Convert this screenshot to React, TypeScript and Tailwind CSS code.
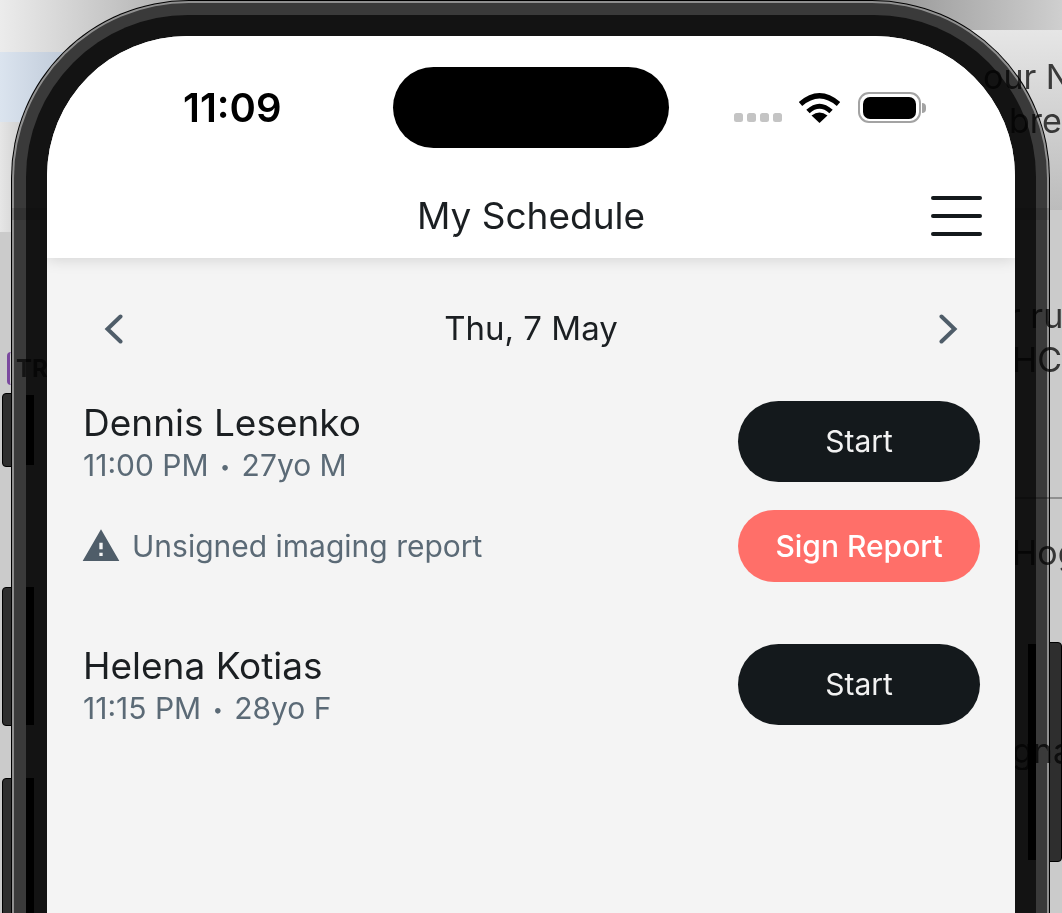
const font = { fontFamily: "Inter, 'Noto Sans', sans-serif" };

const Chevron = ({ flip }: { flip?: boolean }) => (
  <svg width="20" height="30" viewBox="0 0 20 30" fill="none" className={flip ? "rotate-180" : ""}>
    <path d="M16.5 2.5 L3.5 15 L16.5 27.5" stroke="#4f5d69" strokeWidth="4" strokeLinecap="round" strokeLinejoin="miter" />
  </svg>
);

const Wifi = () => (
  <svg width="43" height="31" viewBox="0 0 43 31" fill="none">
    <path d="M2.5 12 Q21.5 -4.5 40.5 12" stroke="#000" strokeWidth="5.2" />
    <path d="M10 19.5 Q21.5 9 33 19.5" stroke="#000" strokeWidth="5" />
    <path d="M21.5 31 L13.5 23.5 Q21.5 17.5 29.5 23.5 Z" fill="#000" />
  </svg>
);

const Battery = () => (
  <div className="flex items-center gap-[1px]">
    <div className="flex h-[31px] w-[63px] items-center justify-center rounded-[11px] border-2 border-[#a3a3a3] bg-white">
      <div className="h-[22px] w-[53px] rounded-[7px] bg-black" />
    </div>
    <div className="h-[10px] w-[4px] rounded-r-full bg-[#a3a3a3]" />
  </div>
);

const Warning = () => (
  <svg width="40" height="40" viewBox="0 0 24 24" className="ml-[-2px]">
    <path fill="#4f5d69" d="M1 21h22L12 2 1 21zm12-3h-2v-2h2v2zm0-4h-2v-4h2v4z" />
  </svg>
);

const PatientRow = ({ name, time, info }: { name: string; time: string; info: string }) => (
  <div className="flex items-start justify-between">
    <div className="flex h-[81px] flex-col">
      <span className="text-[37px] leading-[44px] text-[#1b1f22]">{name}</span>
      <span className="mt-[1px] text-[30px] leading-[38px] text-[#5b6a76]">
        {time} <span className="mx-[3px] text-[18px] align-[3px]">•</span> {info}
      </span>
    </div>
    <button className="h-[81px] w-[242px] rounded-[41px] bg-[#14191c] text-[30px] text-[#f2f2f2]">Start</button>
  </div>
);

const BezelStrip = ({ className }: { className: string }) => <div className={`absolute w-[8px] bg-black ${className}`} />;

export default function App() {
  return (
    <div className="relative h-[913px] w-[1062px] overflow-hidden bg-[#cbcbcb]" style={font}>
      {/* desktop behind the phone */}
      <div className="absolute left-0 top-0 h-[52px] w-[200px] bg-gradient-to-r from-[#ececec] to-[#a8a8a8]" />
      <div className="absolute left-0 top-[52px] h-[70px] w-[120px] bg-gradient-to-r from-[#dbe4ef] to-[#a9b5c6]" />
      <div className="absolute left-0 top-[122px] h-[110px] w-[40px] bg-gradient-to-r from-[#e6e6e6] to-[#bdbdbd]" />
      <div className="absolute right-0 top-0 h-[30px] w-[200px] bg-gradient-to-l from-[#cfcfcf] to-[#8f8f8f]" />
      <div className="absolute right-0 top-[30px] h-[180px] w-[110px] bg-gradient-to-b from-[#e6e6e6] to-[#bcbcbc]" />

      {/* side buttons */}
      <div className="absolute left-[2px] top-[393px] h-[74px] w-[12px] rounded-l-[4px] border border-black bg-[#2e2e2e]" />
      <div className="absolute left-[2px] top-[587px] h-[139px] w-[12px] rounded-l-[4px] border border-black bg-[#2e2e2e]" />
      <div className="absolute left-[2px] top-[778px] h-[140px] w-[12px] rounded-l-[4px] border border-black bg-[#2e2e2e]" />
      <div className="absolute left-[1048px] top-[642px] h-[220px] w-[14px] rounded-r-[4px] border border-black bg-[#2e2e2e]" />

      {/* phone body */}
      <div className="relative ml-[11px] h-[913px] w-[1039px] rounded-t-[178px] bg-black px-[1px] pt-[1px]">
        <div className="h-full rounded-t-[177px] bg-[#909090] px-[2px] pt-[2px]">
          <div className="h-full rounded-t-[175px] bg-[#3a3a3a] pl-[12px] pr-[11px] pt-[12px]">
            <div className="h-full rounded-t-[162px] bg-[#131313] p-[21px] pb-0">
              <div className="flex h-full flex-col overflow-hidden rounded-t-[140px] bg-[#f4f4f4]">
                {/* status bar + header */}
                <div className="relative z-10 bg-white shadow-[0_2px_14px_rgba(0,0,0,0.13)]">
                  <div className="flex items-center pl-[136px] pt-[31px]">
                    <span className="w-[210px] text-[40px] font-semibold leading-[46px] text-black">11:09</span>
                    <div className="h-[81px] w-[276px] rounded-full bg-black" />
                    <div className="ml-[65px] mt-[20px] flex gap-[4px]">
                      <i className="size-[9px] rounded-[2.5px] bg-[#c4c4c4]" />
                      <i className="size-[9px] rounded-[2.5px] bg-[#c4c4c4]" />
                      <i className="size-[9px] rounded-[2.5px] bg-[#c4c4c4]" />
                      <i className="size-[9px] rounded-[2.5px] bg-[#c4c4c4]" />
                    </div>
                    <div className="ml-[16px] flex items-center gap-[17px]">
                      <Wifi />
                      <Battery />
                    </div>
                  </div>
                  <div className="flex h-[110px] items-center justify-between pl-[33px] pr-[33px]">
                    <div className="w-[51px]" />
                    <h1 className="mt-[26px] text-[37px] font-normal leading-[44px] text-[#1b1f22]">My Schedule</h1>
                    <div className="mt-[25px] flex w-[51px] flex-col gap-[14px]">
                      <div className="h-[4px] rounded-full bg-[#14191c]" />
                      <div className="h-[4px] rounded-full bg-[#14191c]" />
                      <div className="h-[4px] rounded-full bg-[#14191c]" />
                    </div>
                  </div>
                </div>

                {/* schedule */}
                <div className="flex flex-col pl-[36px] pr-[35px] pt-[55px]">
                  <div className="flex h-[32px] items-center justify-between pl-[21px] pr-[22px]">
                    <Chevron />
                    <span className="mt-[-2px] text-[33px] leading-[40px] text-[#1b1f22]">Thu, 7 May</span>
                    <Chevron flip />
                  </div>
                  <div className="mt-[56px]">
                    <PatientRow name="Dennis Lesenko" time="11:00 PM" info="27yo M" />
                  </div>
                  <div className="mt-[28px] flex items-center justify-between">
                    <div className="flex items-center gap-[11px]">
                      <Warning />
                      <span className="text-[30px] leading-[40px] text-[#5b6a76]">Unsigned imaging report</span>
                    </div>
                    <button className="h-[72px] w-[242px] rounded-[36px] bg-[#ff6f69] text-[30px] font-medium text-white">
                      Sign Report
                    </button>
                  </div>
                  <div className="mt-[62px]">
                    <PatientRow name="Helena Kotias" time="11:15 PM" info="28yo F" />
                  </div>
                </div>
              </div>
            </div>
          </div>
        </div>
      </div>

      {/* inner bezel strips */}
      <BezelStrip className="left-[26px] top-[395px] h-[70px]" />
      <BezelStrip className="left-[26px] top-[587px] h-[138px]" />
      <BezelStrip className="left-[26px] top-[778px] h-[135px]" />
      <BezelStrip className="left-[1028px] top-[644px] h-[216px]" />

      {/* desktop window showing through the glass edge */}
      <div className="absolute inset-0 mix-blend-multiply">
        <span className="absolute left-[983px] top-[56px] whitespace-nowrap text-[34px] leading-[42px] text-[#444]">our Ne</span>
        <span className="absolute left-[1009px] top-[100px] whitespace-nowrap text-[34px] leading-[42px] text-[#444]">break</span>
        <div className="absolute left-[1015px] top-[208px] h-[12px] w-[35px] bg-[#dddddd]" />
        <div className="absolute left-[11px] top-[208px] h-[12px] w-[36px] bg-[#dddddd]" />
        <div className="absolute left-[1015px] top-[290px] h-[480px] w-[47px] overflow-hidden">
          <span className="absolute left-[-7px] top-[5px] whitespace-nowrap text-[34px] leading-[42px] text-[#444]">r run</span>
          <span className="absolute left-[-3px] top-[49px] whitespace-nowrap text-[34px] leading-[42px] text-[#444]">HC 3</span>
          <div className="absolute left-0 top-[207px] h-[2px] w-full bg-[#b5b5b5]" />
          <span className="absolute left-[-3px] top-[242px] whitespace-nowrap text-[34px] leading-[42px] text-[#444]">Hog</span>
          <span className="absolute left-[-3px] top-[440px] whitespace-nowrap text-[34px] leading-[42px] text-[#444]">gna</span>
        </div>
        <div className="absolute left-[7px] top-[352px] flex h-[33px] w-[40px] items-center overflow-hidden rounded-l-[4px] border-l-[3px] border-[#9a5cc8] pl-[6px] text-[24px] font-bold text-[#555]">
          TR
        </div>
      </div>
    </div>
  );
}
